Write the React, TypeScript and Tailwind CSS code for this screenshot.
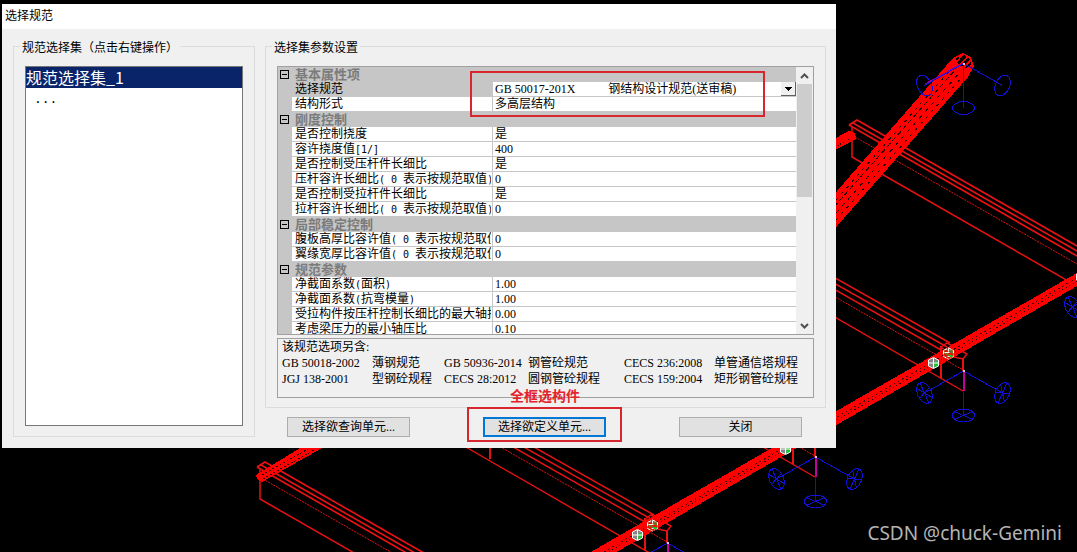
/**
 * Диалог «选择规范» поверх рабочего окна с 3D-каркасом.
 *
 * Что внутри:
 * - StructureScene — каркас (балки, трубы, опоры, узлы) одним SVG на фоне.
 * - PropertyGrid — таблица параметров с группами и полосой прокрутки.
 * - CodeDialog — само окно: список наборов, параметры, кнопки.
 */

import { useState } from "react";
import type { ReactNode } from "react";

type PropertyRow = { label: string; value: string; kind?: "select" };
type PropertyGroup = { title: string; rows: PropertyRow[] };

const CODE_OPTIONS = ["GB 50017-201X" + "\u00a0".repeat(11) + "钢结构设计规范(送审稿)"];

const GROUPS: PropertyGroup[] = [
  {
    title: "基本属性项",
    rows: [
      { label: "选择规范", value: CODE_OPTIONS[0], kind: "select" },
      { label: "结构形式", value: "多高层结构" },
    ],
  },
  {
    title: "刚度控制",
    rows: [
      { label: "是否控制挠度", value: "是" },
      { label: "容许挠度值[1/]", value: "400" },
      { label: "是否控制受压杆件长细比", value: "是" },
      { label: "压杆容许长细比( 0 表示按规范取值)", value: "0" },
      { label: "是否控制受拉杆件长细比", value: "是" },
      { label: "拉杆容许长细比( 0 表示按规范取值)", value: "0" },
    ],
  },
  {
    title: "局部稳定控制",
    rows: [
      { label: "腹板高厚比容许值( 0 表示按规范取值)", value: "0" },
      { label: "翼缘宽厚比容许值( 0 表示按规范取值)", value: "0" },
    ],
  },
  {
    title: "规范参数",
    rows: [
      { label: "净截面系数(面积)", value: "1.00" },
      { label: "净截面系数(抗弯模量)", value: "1.00" },
      { label: "受拉构件按压杆控制长细比的最大轴拉比", value: "0.00" },
      { label: "考虑梁压力的最小轴压比", value: "0.10" },
    ],
  },
];

const RELATED_CODES = [
  ["GB 50018-2002", "薄钢规范", "GB 50936-2014", "钢管砼规范", "CECS 236:2008", "单管通信塔规程"],
  ["JGJ 138-2001", "型钢砼规程", "CECS 28:2012", "圆钢管砼规程", "CECS 159:2004", "矩形钢管砼规程"],
];

// Шаг каркаса на экране: соседние узлы отличаются на (-148, +86).
const BEAM_STEPS = [0, 1, 2];
const NODE_STEPS = [-1, 0, 1, 2];
const shift = (n: number) => `translate(${-148 * n} ${86 * n})`;

// Латиница идёт моноширинной в половину иероглифа, чтобы подписи стояли по сетке.
function Mixed({ text }: { text: string }) {
  return (
    <>
      {text.split(/([\x20-\x7e]+)/).map((part, i) =>
        i % 2 ? (
          <span key={i} className="font-['DejaVu_Sans_Mono',monospace] text-[10px] whitespace-pre">
            {part}
          </span>
        ) : (
          part
        )
      )}
    </>
  );
}

function Support({ crossed = true }: { crossed?: boolean }) {
  const disc = (
    <>
      <ellipse rx="11" ry="6.5" />
      {crossed && <path d="M-9-4 9 4M-9 4 9-4M0-6V0" />}
    </>
  );
  const sideDisc = (
    <>
      <ellipse rx="7" ry="11" />
      {crossed && <path d="M-5-7 5 7M-7 3 7-3M0-11V11" />}
    </>
  );
  return (
    <g stroke="#1010d8" fill="none">
      <path d="M0 0V44M0 0-39 22M0 0 39 22" />
      <g transform="translate(0 44.5)">{disc}</g>
      <g transform="translate(-39 22) rotate(-24)">{sideDisc}</g>
      <g transform="translate(39 22) rotate(24)">{sideDisc}</g>
    </g>
  );
}

function Nodes() {
  return (
    <g shapeRendering="auto">
      <g transform="translate(933.500 363)">
        <path d="M-5-3 0-5.500 5-3V3L0 5.500-5 3Z" fill="#858585" />
        <path d="M1-1 5-2V3L1 5Z" fill="#00d820" />
        <path d="M-5-3 0-5.500 5-3V3L0 5.500-5 3ZM0-5V5M-5 0H5" stroke="#fff" fill="none" />
      </g>
      <g transform="translate(948.500 353.500)">
        <path d="M-5-3 0-5.500 5-3V3L0 5.500-5 3Z" fill="#7d6a20" stroke="#fff" strokeDasharray="4 1" />
        <path d="M-4-3 5 2M-5 1 2 5" stroke="#ff0000" strokeWidth="1.500" />
        <path d="M-4-1H1M0-5V-2M-1 3H2" stroke="#fff" />
        <path d="M1 2.500H4" stroke="#00d020" strokeWidth="2" />
      </g>
    </g>
  );
}

// Торец балки, примыкающей к главной трубе слева сверху.
function BeamTail() {
  return (
    <g stroke="#e81212" fill="none" shapeRendering="auto">
      <path d="M648 172 950 343M641 174 947 347M637 177 941 350" strokeWidth="1.500" />
      <path d="M637 184 963 370" strokeDasharray="2 1" />
      <path d="M637 203 963 391" strokeWidth="1.400" />
      <path d="M941 346V378M963 358V371" strokeWidth="2" />
      <path d="M941 347 947 343 967 354 963 359 954 357Z" strokeWidth="1.500" />
    </g>
  );
}

// Начало балки, уходящей вправо вниз.
function BeamHead() {
  return (
    <g stroke="#e81212" fill="none" shapeRendering="auto">
      <path d="M849 125 857 120 1077 246M853 123 1077 251M849 125 1077 256" strokeWidth="1.700" />
      <path d="M855 137 1077 264" strokeDasharray="2 1" />
      <path d="M852 126V157L1077 286" strokeWidth="1.500" />
    </g>
  );
}

function StructureScene() {
  return (
    <svg
      className="absolute inset-0 h-full w-full"
      viewBox="0 0 1077 552"
      preserveAspectRatio="xMinYMin slice"
      shapeRendering="crispEdges"
      aria-hidden="true"
    >
      <BeamHead />
      <g transform="translate(-592 342)">
        <BeamHead />
      </g>
      {BEAM_STEPS.map((n) => (
        <g key={n} transform={shift(n)}>
          <BeamTail />
        </g>
      ))}
      <path d="M490 448V459" stroke="#e81212" strokeWidth="2" />

      {/* Короткие трубы у краёв окна */}
      <path d="M830 141 849 131 855 133 856 139 830 153Z" fill="#ff0000" />
      <path d="M835 147 853 137" stroke="#300000" strokeDasharray="1 2" />
      <path d="M256 475 300 448H322L262 482 257 479Z" fill="#ff0000" />
      <path d="M262 475 308 449M263 479 314 450" stroke="#300000" strokeDasharray="2 2" />

      {/* Главная труба */}
      <path d="M1077 273V286L608 557H582Z" fill="#ff0000" />
      <path d="M1077 278 597 556" stroke="#500000" strokeDasharray="2 3" />
      <path d="M1077 281 602 556" stroke="#300000" strokeDasharray="1 3" />

      {/* Наклонная колонна */}
      <path d="M830 199 953 58 963 53 971 57 974 66 968 77 830 234Z" fill="#ff0000" />
      <g stroke="#200000" fill="none">
        <path d="M836 200 952 68" strokeDasharray="3 5" />
        <path d="M834 207 956 69" strokeDasharray="5 3" />
        <path d="M836 213 961 71" strokeDasharray="4 5" />
        <path d="M836 220 964 75" strokeDasharray="3 5" />
      </g>
      <path d="M956 58 964 55 970 59 971 65 966 68 958 64Z" fill="#000" />
      <path d="M956 63 963 54M959 66 968 56M963 68 971 60" stroke="#ff0000" strokeWidth="1.500" />

      <g transform="translate(963.500 63.500)">
        <Support crossed={false} />
        <path d="M-1-1H1V1H-1Z" fill="#ccc" />
      </g>
      <path d="M963 63 925 84" stroke="#8a00a0" />

      {NODE_STEPS.map((n) => (
        <g key={n} transform={shift(n)}>
          <g transform="translate(963.500 371)">
            <Support />
            <path d="M0 0V20" stroke="#c000a0" strokeWidth="2" />
            <path d="M-1-1H1V1H-1Z" fill="#ccc" />
          </g>
          <Nodes />
        </g>
      ))}
    </svg>
  );
}

function GroupBox({
  title,
  className = "",
  children,
}: {
  title: string;
  className?: string;
  children: ReactNode;
}) {
  return (
    <fieldset className={`min-w-0 border border-[#dcdcdc] px-[11px] pt-[11px] ${className}`}>
      <legend className="-ml-[5px] h-[17px] px-0.5 leading-5">{title}</legend>
      {children}
    </fieldset>
  );
}

function PropertyGrid() {
  const [code, setCode] = useState(CODE_OPTIONS[0]);
  const [closed, setClosed] = useState<string[]>([]);

  const toggle = (title: string) =>
    setClosed((prev) =>
      prev.includes(title) ? prev.filter((t) => t !== title) : [...prev, title]
    );

  return (
    <div className="relative flex h-[269px] border border-[#a0a0a0] bg-white">
      <div className="min-w-0 flex-1 overflow-hidden bg-[#c6c6c6]">
        <table className="w-full table-fixed border-separate border-spacing-0 leading-[14px]">
          <colgroup>
            <col className="w-[14px]" />
            <col className="w-[201px]" />
            <col />
          </colgroup>
          {GROUPS.map((group) => (
            <tbody key={group.title}>
              <tr className="h-[15px]">
                <td className="p-0">
                  <button
                    type="button"
                    aria-label={group.title}
                    onClick={() => toggle(group.title)}
                    className="ml-0.5 flex size-[9px] items-center justify-center border border-black"
                  >
                    <span className="h-px w-[5px] bg-black" />
                  </button>
                </td>
                <th
                  colSpan={2}
                  className="h-[15px] p-0 pl-[3px] text-left text-[13px] font-bold text-[#7b7b7b]"
                >
                  {group.title}
                </th>
              </tr>
              {!closed.includes(group.title) &&
                group.rows.map((row) => (
                  <tr key={row.label} className="h-[15px]">
                    <td className="p-0" />
                    <td
                      className={`border-r border-b border-[#c6c6c6] p-0 pr-px pl-[3px] ${
                        row.kind ? "bg-[#c6c6c6]" : "bg-white"
                      }`}
                    >
                      <div className="h-[14px] overflow-hidden leading-[15px] whitespace-nowrap">
                        <Mixed text={row.label} />
                      </div>
                    </td>
                    <td className="border-b border-[#c6c6c6] bg-white p-0 pl-0.5">
                      {row.kind === "select" ? (
                        <div className="relative flex h-[14px]">
                          <select
                            aria-label={row.label}
                            value={code}
                            onChange={(e) => setCode(e.target.value)}
                            className="h-[14px] w-full appearance-none bg-white p-0 leading-[14px] outline-none"
                          >
                            {CODE_OPTIONS.map((option) => (
                              <option key={option}>{option}</option>
                            ))}
                          </select>
                          <span className="pointer-events-none absolute right-0 flex h-[14px] w-[15px] items-center justify-center border-r border-b border-[#606060] bg-[#f0f0f0]">
                            <svg width="7" height="4" viewBox="0 0 7 4" shapeRendering="crispEdges">
                              <path d="M0 0H7L3.500 4Z" />
                            </svg>
                          </span>
                        </div>
                      ) : (
                        <div className="h-[14px] overflow-hidden leading-[15px] whitespace-nowrap">
                          {row.value}
                        </div>
                      )}
                    </td>
                  </tr>
                ))}
            </tbody>
          ))}
        </table>
      </div>

      {/* Полоса прокрутки */}
      <div className="flex w-[17px] flex-col bg-[#f0f0f0] pr-px pl-px">
        <span className="flex h-[17px] items-center justify-center">
          <svg width="9" height="6" viewBox="0 0 9 6" fill="none" stroke="#505050" strokeWidth="2">
            <path d="M1 5 4.500 1.500 8 5" />
          </svg>
        </span>
        <span className="h-[113px] bg-[#cdcdcd]" />
        <span className="mt-auto flex h-[17px] items-center justify-center">
          <svg width="9" height="6" viewBox="0 0 9 6" fill="none" stroke="#505050" strokeWidth="2">
            <path d="M1 1 4.500 4.500 8 1" />
          </svg>
        </span>
      </div>

      {/* Пометка вокруг выбранной нормы */}
      <div className="pointer-events-none absolute top-1 left-48 h-[46px] w-[295px] border-2 border-[#d8262e]" />
    </div>
  );
}

const BUTTON_CLASS = "h-5 w-[123px] bg-[#e1e1e1] leading-[16px]";

function CodeDialog() {
  return (
    <section
      role="dialog"
      aria-labelledby="dialog-title"
      className="relative w-full max-w-[834px] bg-[#f0f0f0]"
    >
      <h1 id="dialog-title" className="h-[25px] bg-white pl-[3px] leading-[24px]">
        选择规范
      </h1>
      <div className="flex gap-2.5 pt-[9px] pr-2.5 pb-[11px] pl-[11px]">
        <GroupBox title="规范选择集（点击右键操作）" className="flex w-[242px] flex-col pb-2.5">
          <ul role="listbox" className="flex-1 border border-[#777] bg-white text-base">
            <li
              role="option"
              aria-selected="true"
              className="h-[21px] bg-[#0a246a] font-['Noto_Sans_CJK_SC',sans-serif] leading-[20px] text-white"
            >
              规范选择集_1
            </li>
            <li
              role="option"
              aria-selected="false"
              className="pl-2 font-['Liberation_Mono',monospace] text-[13px] leading-[24px]"
            >
              ...
            </li>
          </ul>
        </GroupBox>

        <div className="flex min-w-0 flex-1 flex-col gap-[9px]">
          <GroupBox title="选择集参数设置" className="pb-[9px]">
            <PropertyGrid />
            <div className="mt-[3px] h-[60px] border border-[#a0a0a0] pl-1 leading-4">
              <p>该规范选项另含:</p>
              <table className="table-fixed border-collapse whitespace-nowrap">
                <colgroup>
                  <col className="w-[90px]" />
                  <col className="w-[72px]" />
                  <col className="w-[84px]" />
                  <col className="w-[96px]" />
                  <col className="w-[90px]" />
                  <col className="w-[90px]" />
                </colgroup>
                <tbody>
                  {RELATED_CODES.map((line) => (
                    <tr key={line[0]}>
                      {line.map((cell) => (
                        <td key={cell} className="h-4 p-0">
                          {cell}
                        </td>
                      ))}
                    </tr>
                  ))}
                </tbody>
              </table>
            </div>
          </GroupBox>

          <div className="flex justify-between pr-6 pl-[22px]">
            <button type="button" className={`${BUTTON_CLASS} border border-[#adadad]`}>
              选择欲查询单元...
            </button>
            <div className="relative">
              <button type="button" className={`${BUTTON_CLASS} border-2 border-[#0078d7]`}>
                选择欲定义单元...
              </button>
              <div className="pointer-events-none absolute -top-2.5 -left-4 h-[35px] w-[155px] border-2 border-[#d8262e]" />
              <span className="absolute -top-7 left-[27px] text-sm leading-4 font-bold whitespace-nowrap text-[#e4242c]">
                全框选构件
              </span>
            </div>
            <button type="button" className={`${BUTTON_CLASS} border border-[#adadad]`}>
              关闭
            </button>
          </div>
        </div>
      </div>
    </section>
  );
}

export default function App() {
  return (
    <main className="relative min-h-screen overflow-hidden bg-black pt-1 pl-0.5 font-['Liberation_Serif','Noto_Sans_CJK_SC',sans-serif] text-xs text-black">
      <StructureScene />
      <CodeDialog />
      <p className="absolute right-[15px] bottom-1.5 font-['Noto_Sans',sans-serif] text-[19px] leading-[26px] text-[#b4b4b4]">
        CSDN @chuck-Gemini
      </p>
    </main>
  );
}
